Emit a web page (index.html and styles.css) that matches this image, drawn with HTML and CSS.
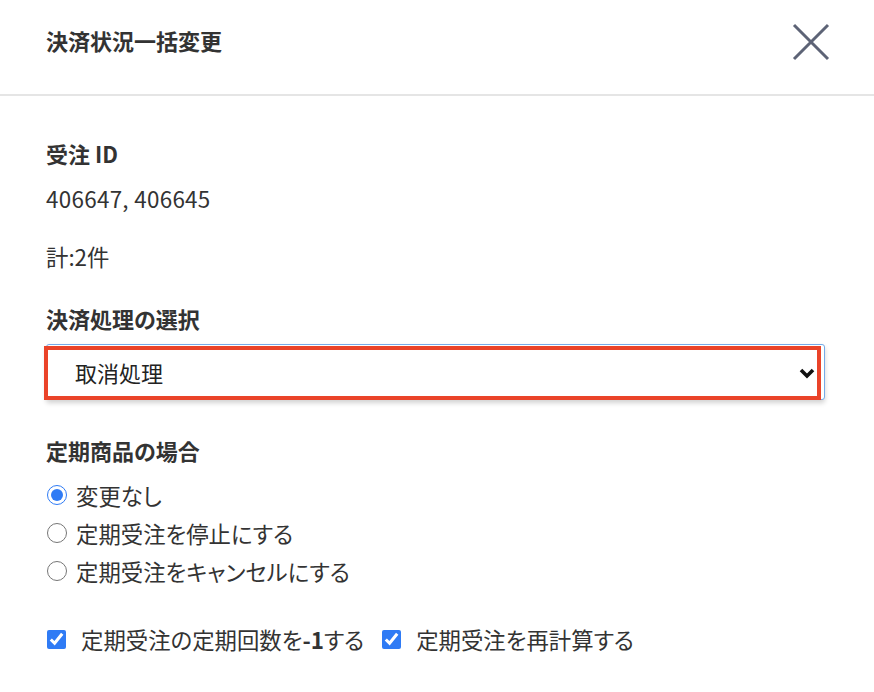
FILE: index.html
```html
<!DOCTYPE html>
<html lang="ja">
<head>
    <meta charset="UTF-8">
    <meta name="viewport" content="width=device-width, initial-scale=1.0">
    <title>決済状況一括変更</title>
    <link rel="stylesheet" href="styles.css">
</head>
<body>
    <div class="modal">
        <div class="modal-header">
            <h2 class="modal-title">決済状況一括変更</h2>
            <button class="close-btn" type="button" aria-label="閉じる">
                <svg width="38" height="38" viewBox="0 0 38 38">
                    <path d="M2 2 L36 36 M36 2 L2 36" stroke="#5d6376" stroke-width="3" fill="none"/>
                </svg>
            </button>
        </div>

        <div class="modal-body">
            <h3 class="section-label first">受注 ID</h3>
            <p class="order-ids">406647, 406645</p>
            <p class="order-count">計:2件</p>

            <h3 class="section-label payment">決済処理の選択</h3>
            <div class="select-wrap">
                <select class="payment-select">
                    <option>取消処理</option>
                </select>
                <svg class="chevron" width="16" height="12" viewBox="0 0 16 12">
                    <path d="M2 3 L8 9 L14 3" stroke="#111" stroke-width="3.6" fill="none"/>
                </svg>
                <div class="highlight"></div>
            </div>

            <h3 class="section-label regular">定期商品の場合</h3>
            <div class="radio-list">
                <label class="radio-row"><input type="radio" name="regular" checked><span>変更なし</span></label>
                <label class="radio-row"><input type="radio" name="regular"><span>定期受注を停止にする</span></label>
                <label class="radio-row"><input type="radio" name="regular"><span>定期受注をキャンセルにする</span></label>
            </div>

            <div class="check-list">
                <label class="check-row"><input type="checkbox" checked><span>定期受注の定期回数を<b>-1</b>する</span></label>
                <label class="check-row"><input type="checkbox" checked><span>定期受注を再計算する</span></label>
            </div>
        </div>
    </div>
</body>
</html>
```

FILE: styles.css
```css
body {
    margin: 0;
    font-family: "Noto Sans CJK JP", "Noto Sans", sans-serif;
    font-feature-settings: "palt";
    font-size: 22.4px;
    color: #333;
    background: #fff;
}
.modal-header {
    height: 96px;
    box-sizing: border-box;
    display: flex;
    align-items: flex-start;
    justify-content: space-between;
    padding: 23px 44px 0 46px;
    border-bottom: 2px solid #e5e5e5;
}
.modal-title {
    margin: 0;
    font-size: 22px;
    line-height: 34px;
    font-weight: bold;
    color: #333;
}
.close-btn {
    background: none;
    border: none;
    padding: 0;
    cursor: pointer;
    line-height: 0;
}
.modal-body {
    padding: 0 49px 0 46px;
}
.section-label {
    margin: 0;
    font-size: 22px;
    line-height: 30px;
    font-weight: bold;
    color: #333;
}
.section-label.first {
    margin-top: 42px;
}
.section-label.payment {
    margin-top: 32px;
}
.section-label.regular {
    margin-top: 35px;
}
.order-ids {
    margin: 15px 0 0;
    line-height: 30px;
    letter-spacing: 0.3px;
}
.order-count {
    margin: 28px 0 0;
    line-height: 30px;
}
.select-wrap {
    position: relative;
    margin-top: 11px;
    height: 56px;
}
.payment-select {
    appearance: none;
    -webkit-appearance: none;
    width: 100%;
    height: 56px;
    box-sizing: border-box;
    padding: 0 40px 0 28px;
    font-family: inherit;
    font-feature-settings: "palt";
    font-size: 22px;
    color: #222;
    background: #fff;
    border: 1px solid #76aae8;
    border-radius: 3px;
    box-shadow: 0 3px 5px rgba(0, 0, 0, 0.18);
}
.chevron {
    position: absolute;
    right: 10px;
    top: 23px;
    pointer-events: none;
}
/* red frame drawn over the select */
.highlight {
    position: absolute;
    left: -2px;
    top: 2px;
    width: 777px;
    height: 54px;
    box-sizing: border-box;
    border: 4px solid #ea4329;
    pointer-events: none;
}
.radio-list {
    margin-top: 11px;
}
.radio-row {
    display: flex;
    align-items: center;
    height: 38px;
    gap: 9px;
}
.radio-row input {
    width: 20px;
    height: 20px;
    margin: 0 0 0 1px;
    accent-color: #2f7bf5;
}
.check-list {
    display: flex;
    gap: 17px;
    margin-top: 35px;
}
.check-row {
    display: flex;
    align-items: center;
    height: 28px;
    gap: 15px;
}
.check-row input {
    width: 19px;
    height: 19px;
    margin: 0 0 0 1px;
    accent-color: #2f7bf5;
}
.check-row b {
    font-weight: bold;
}
```
